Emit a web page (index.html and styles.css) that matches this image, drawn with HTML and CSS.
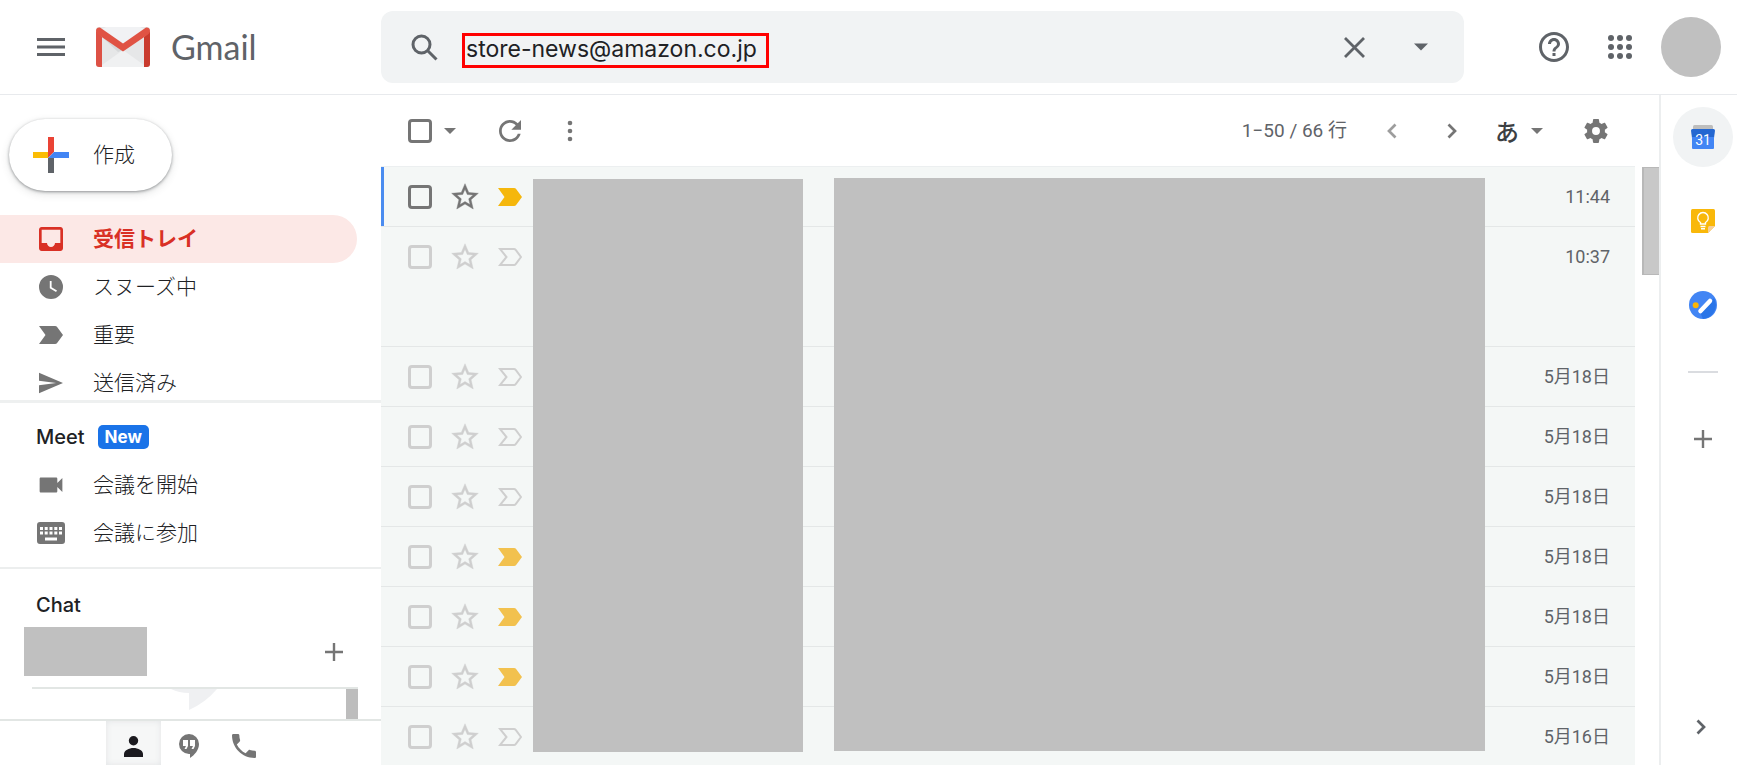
FILE: index.html
```html
<!DOCTYPE html>
<html lang="ja">
<head>
<meta charset="utf-8">
<title>Gmail</title>
<link rel="stylesheet" href="styles.css">
</head>
<body>
<svg class="defs" aria-hidden="true">
  <symbol id="star" viewBox="0 0 24 24"><path d="M22 9.24l-7.19-.62L12 2 9.19 8.63 2 9.24l5.46 4.73L5.82 21 12 17.27 18.18 21l-1.63-7.03L22 9.24zM12 15.4l-3.76 2.27 1-4.28-3.32-2.88 4.38-.38L12 6.1l1.71 4.04 4.38.38-3.32 2.88 1 4.28L12 15.4z" stroke="currentColor" stroke-width=".3"/></symbol>
  <symbol id="mark" viewBox="0 0 24 18"><path d="M0 0h16q1.500 0 2.300 1.200L24 9l-5.700 7.800Q17.500 18 16 18H0l6.500-9z"/></symbol>
  <symbol id="mark-o" viewBox="0 0 24 18"><path d="M2 1h14q1 0 1.700.9L23 9l-5.300 7.100Q17 17 16 17H2l6.500-8z" fill="none" stroke="currentColor" stroke-width="2"/></symbol>
  <symbol id="down" viewBox="0 0 12 6"><path d="M0 0h12L6 6z"/></symbol>
  <symbol id="right" viewBox="0 0 10 16"><path d="M1.500 1.500L8 8l-6.500 6.500" fill="none" stroke="currentColor" stroke-width="2.700"/></symbol>
  <symbol id="plus" viewBox="0 0 18 18"><path d="M9 0v18M0 9h18" fill="none" stroke="currentColor" stroke-width="2.400"/></symbol>
</svg>

<header class="top">
  <div class="brand">
    <button class="icon" aria-label="メインメニュー"><svg width="28" height="18" viewBox="0 0 28 18"><path d="M0 0h28v3H0zM0 7.500h28v3H0zM0 15h28v3H0z"/></svg></button>
    <a class="logo" href="#">
      <svg width="54" height="40" viewBox="0 0 54 40" aria-hidden="true">
        <rect width="54" height="40" rx="3" fill="#e6e7e8"/>
        <path d="M6 10l21 14L48 10V2L44 0H10L6 2z" fill="#f1f2f4"/>
        <path d="M6 38l21-15 21 15v2H6z" fill="#f0f1f2"/>
        <path d="M6 10l16 15 5-2z" fill="#d6d8d9"/>
        <path d="M0 4v33q0 3 3 3h3V10z" fill="#dd5145"/>
        <path d="M54 4v33q0 3-3 3h-3V10z" fill="#c93b2e"/>
        <path d="M0 4Q0 0 4 .5L27 16.500 50 .5Q54 0 54 4q0 2-2 3.500L27 24.500 2 7.500Q0 6 0 4z" fill="#e05344"/>
      </svg>
      <span>Gmail</span>
    </a>
  </div>
  <form class="search" role="search">
    <button class="icon" type="button" aria-label="検索"><svg class="line" width="27" height="27" viewBox="0 0 27 27"><circle cx="10.500" cy="10.500" r="8.500"/><path d="M16.500 16.500l9 9"/></svg></button>
    <input class="query" type="text" aria-label="メールを検索" value="store-news@amazon.co.jp">
    <button class="icon clear" type="button" aria-label="クリア"><svg width="21" height="21" viewBox="0 0 21 21"><path d="M1 1l19 19M20 1L1 20" stroke="currentColor" stroke-width="2.800"/></svg></button>
    <button class="icon" type="button" aria-label="検索オプション"><svg width="14" height="8"><use href="#down"/></svg></button>
  </form>
  <div class="account">
    <button class="icon" aria-label="サポート"><svg width="36" height="36" viewBox="0 0 24 24"><path d="M11 18h2v-2h-2v2zm1-16C6.480 2 2 6.480 2 12s4.480 10 10 10 10-4.480 10-10S17.520 2 12 2zm0 18c-4.410 0-8-3.590-8-8s3.590-8 8-8 8 3.590 8 8-3.590 8-8 8zm0-14c-2.210 0-4 1.790-4 4h2c0-1.100.9-2 2-2s2 .9 2 2c0 2-3 1.750-3 5h2c0-2.250 3-2.500 3-5 0-2.210-1.790-4-4-4z"/></svg></button>
    <button class="icon" aria-label="Google アプリ"><svg width="24" height="24" viewBox="0 0 24 24"><g><circle cx="3" cy="3" r="3"/><circle cx="12" cy="3" r="3"/><circle cx="21" cy="3" r="3"/><circle cx="3" cy="12" r="3"/><circle cx="12" cy="12" r="3"/><circle cx="21" cy="12" r="3"/><circle cx="3" cy="21" r="3"/><circle cx="12" cy="21" r="3"/><circle cx="21" cy="21" r="3"/></g></svg></button>
    <button class="avatar" aria-label="アカウント"></button>
  </div>
</header>

<div class="body">
  <aside class="side">
    <button class="compose">
      <svg width="36" height="36" viewBox="0 0 36 36" aria-hidden="true"><path d="M15 0h6v15l-6 6z" fill="#ea4335"/><path d="M0 15h15v6H0z" fill="#fbbc04"/><path d="M15 21h6v15h-6z" fill="#5f6368"/><path d="M21 15h15v6H15z" fill="#4285f4"/></svg>
      作成
    </button>
    <nav class="folders">
      <a class="item current" href="#"><svg width="24" height="24" viewBox="3 3 18 18"><path d="M19 3H5c-1.100 0-2 .9-2 2v14c0 1.100.9 2 2 2h14c1.100 0 2-.9 2-2V5c0-1.100-.9-2-2-2zm0 12h-4c0 1.660-1.350 3-3 3s-3-1.340-3-3H5V5h14v10z"/></svg>受信トレイ</a>
      <a class="item" href="#"><svg width="24" height="24" viewBox="2 2 20 20"><path d="M12 2a10 10 0 1 0 0 20 10 10 0 0 0 0-20zm4.200 14.200L11 13V7h1.500v5.200l4.500 2.700-.8 1.300z"/></svg>スヌーズ中</a>
      <a class="item" href="#"><svg width="24" height="18"><use href="#mark"/></svg>重要</a>
      <a class="item" href="#"><svg width="24" height="24" viewBox="2 1.500 21 21"><path d="M2 21l21-9L2 3v7l15 2-15 2z"/></svg>送信済み</a>
    </nav>
    <section class="meet">
      <h2>Meet <span class="badge">New</span></h2>
      <a class="item" href="#"><svg width="24" height="24" viewBox="2.500 2.500 19 19"><path d="M17 10.500V7c0-.55-.45-1-1-1H4c-.55 0-1 .45-1 1v10c0 .55.450 1 1 1h12c.55 0 1-.45 1-1v-3.500l4 4v-11l-4 4z"/></svg>会議を開始</a>
      <a class="item wide" href="#"><svg width="28" height="22" viewBox="0 0 28 22"><path fill-rule="evenodd" d="M3 0h22q3 0 3 3v16q0 3-3 3H3q-3 0-3-3V3q0-3 3-3zM3 5v3h3V5zM7.700 5v3h3V5zM12.500 5v3h3V5zM17.300 5v3h3V5zM22 5v3h3V5zM3 9.500v3h3v-3zM7.700 9.500v3h3v-3zM12.500 9.500v3h3v-3zM17.300 9.500v3h3v-3zM22 9.500v3h3v-3zM8 15.500v3h12v-3z"/></svg>会議に参加</a>
    </section>
    <section class="chat">
      <h2>Chat</h2>
      <div class="me"><span class="name"></span><button class="icon" aria-label="新しいチャット"><svg width="18" height="18"><use href="#plus"/></svg></button></div>
      <div class="convos">
        <svg width="46" height="21" viewBox="0 0 46 21" aria-hidden="true"><path d="M0 0h46Q34 14 18 21V4Q8 4 0 0z"/></svg>
        <span class="thumb"></span>
      </div>
    </section>
    <div class="tabs">
      <button class="tab on" aria-label="連絡先"><svg width="19" height="21" viewBox="0 0 19 21"><circle cx="9.500" cy="4.700" r="4.700"/><path d="M0 21v-3c0-3.500 5-6 9.500-6s9.500 2.500 9.500 6v3z"/></svg></button>
      <button class="tab" aria-label="ハングアウト"><svg width="20" height="24" viewBox="0 0 20 24"><path fill-rule="evenodd" d="M10 0a10 10 0 0 1 10 10c0 6-4.500 11-9 14v-4h-1A10 10 0 0 1 10 0zM4 6v6h3l-1.500 3h2L9 12V6zM11 6v6h3l-1.500 3h2L16 12V6z"/></svg></button>
      <button class="tab" aria-label="電話"><svg width="24" height="24" viewBox="3 3 18 18"><path d="M6.620 10.790c1.440 2.830 3.760 5.140 6.590 6.590l2.200-2.200c.27-.27.670-.36 1.020-.24 1.120.370 2.330.570 3.570.570.550 0 1 .45 1 1V20c0 .55-.45 1-1 1C10.610 21 3 13.390 3 4c0-.55.450-1 1-1h3.500c.55 0 1 .45 1 1 0 1.250.2 2.450.570 3.570.110.350.030.740-.25 1.020l-2.200 2.200z"/></svg></button>
    </div>
  </aside>

  <main class="mail">
    <div class="toolbar">
      <input type="checkbox" class="check" aria-label="すべて選択">
      <button class="icon pick" aria-label="選択"><svg width="12" height="6"><use href="#down"/></svg></button>
      <button class="icon reload" aria-label="更新"><svg width="22" height="22" viewBox="4 4 16 16"><path d="M17.650 6.350C16.200 4.900 14.210 4 12 4c-4.420 0-7.990 3.580-7.990 8s3.570 8 7.990 8c3.730 0 6.840-2.550 7.730-6h-2.080c-.82 2.330-3.040 4-5.650 4-3.310 0-6-2.690-6-6s2.690-6 6-6c1.660 0 3.140.690 4.220 1.780L13 11h7V4l-2.350 2.350z"/></svg></button>
      <button class="icon" aria-label="その他"><svg width="6" height="22" viewBox="0 0 6 22"><circle cx="3" cy="3" r="2.300"/><circle cx="3" cy="11" r="2.300"/><circle cx="3" cy="19" r="2.300"/></svg></button>
      <span class="count">1−50 / 66 行</span>
      <button class="icon prev" aria-label="前"><svg width="10" height="16"><use href="#right"/></svg></button>
      <button class="icon next" aria-label="次"><svg width="10" height="16"><use href="#right"/></svg></button>
      <button class="lang">あ<svg width="12" height="6"><use href="#down"/></svg></button>
      <button class="icon" aria-label="設定"><svg width="24" height="26" viewBox="2.300 2 19.400 20"><path d="M19.140 12.940c.040-.3.060-.61.060-.94 0-.32-.02-.64-.07-.94l2.030-1.580c.18-.14.230-.41.120-.61l-1.920-3.320c-.12-.22-.37-.29-.59-.22l-2.390.960c-.5-.38-1.030-.7-1.620-.94l-.36-2.540c-.04-.24-.24-.41-.48-.41h-3.840c-.24 0-.43.170-.47.410l-.36 2.540c-.59.240-1.130.570-1.620.940l-2.390-.96c-.22-.08-.47 0-.59.220L2.740 8.870c-.12.210-.08.470.120.610l2.030 1.580c-.05.300-.09.630-.09.940s.02.640.070.940l-2.030 1.580c-.18.140-.23.410-.12.610l1.920 3.320c.12.220.370.290.590.220l2.390-.96c.5.380 1.030.7 1.620.940l.36 2.540c.05.240.240.410.480.410h3.840c.24 0 .44-.17.470-.41l.36-2.540c.59-.24 1.130-.56 1.620-.94l2.390.960c.22.080.470 0 .59-.22l1.920-3.320c.12-.22.070-.47-.12-.61l-2.010-1.580zM12 15.200A3.200 3.200 0 1 1 12 8.800a3.200 3.200 0 0 1 0 6.400z"/></svg></button>
    </div>
    <div class="scroller">
      <ul class="rows">
        <li class="row focus"><input type="checkbox" class="check" aria-label="選択"><button class="icon" aria-label="スター"><svg width="32" height="32"><use href="#star"/></svg></button><button class="icon gold" aria-label="重要"><svg width="24" height="18"><use href="#mark"/></svg></button><time>11:44</time></li>
        <li class="row tall"><input type="checkbox" class="check" aria-label="選択"><button class="icon" aria-label="スター"><svg width="32" height="32"><use href="#star"/></svg></button><button class="icon" aria-label="重要"><svg width="24" height="18"><use href="#mark-o"/></svg></button><time>10:37</time></li>
        <li class="row"><input type="checkbox" class="check" aria-label="選択"><button class="icon" aria-label="スター"><svg width="32" height="32"><use href="#star"/></svg></button><button class="icon" aria-label="重要"><svg width="24" height="18"><use href="#mark-o"/></svg></button><time>5月18日</time></li>
        <li class="row"><input type="checkbox" class="check" aria-label="選択"><button class="icon" aria-label="スター"><svg width="32" height="32"><use href="#star"/></svg></button><button class="icon" aria-label="重要"><svg width="24" height="18"><use href="#mark-o"/></svg></button><time>5月18日</time></li>
        <li class="row"><input type="checkbox" class="check" aria-label="選択"><button class="icon" aria-label="スター"><svg width="32" height="32"><use href="#star"/></svg></button><button class="icon" aria-label="重要"><svg width="24" height="18"><use href="#mark-o"/></svg></button><time>5月18日</time></li>
        <li class="row"><input type="checkbox" class="check" aria-label="選択"><button class="icon" aria-label="スター"><svg width="32" height="32"><use href="#star"/></svg></button><button class="icon gold" aria-label="重要"><svg width="24" height="18"><use href="#mark"/></svg></button><time>5月18日</time></li>
        <li class="row"><input type="checkbox" class="check" aria-label="選択"><button class="icon" aria-label="スター"><svg width="32" height="32"><use href="#star"/></svg></button><button class="icon gold" aria-label="重要"><svg width="24" height="18"><use href="#mark"/></svg></button><time>5月18日</time></li>
        <li class="row"><input type="checkbox" class="check" aria-label="選択"><button class="icon" aria-label="スター"><svg width="32" height="32"><use href="#star"/></svg></button><button class="icon gold" aria-label="重要"><svg width="24" height="18"><use href="#mark"/></svg></button><time>5月18日</time></li>
        <li class="row"><input type="checkbox" class="check" aria-label="選択"><button class="icon" aria-label="スター"><svg width="32" height="32"><use href="#star"/></svg></button><button class="icon" aria-label="重要"><svg width="24" height="18"><use href="#mark-o"/></svg></button><time>5月16日</time></li>
      </ul>
      <div class="mask senders"></div>
      <div class="mask subjects"></div>
      <div class="track"><div class="bar"></div></div>
    </div>
  </main>

  <aside class="apps">
    <button class="app on" aria-label="カレンダー"><svg width="24" height="24" viewBox="0 0 24 24"><path d="M2 5V1.500Q2 0 3.500 0h17Q22 0 22 1.500V5z" fill="#bdbdbd"/><path d="M0 5.500Q0 4 1.500 4h21Q24 4 24 5.500L23 13H1z" fill="#2467d1"/><path d="M1 12h22v11q0 1-1 1H2q-1 0-1-1z" fill="#4285f4"/><text x="12" y="19.500" class="day">31</text></svg></button>
    <button class="app" aria-label="Keep"><svg width="24" height="24" viewBox="0 0 24 24"><path d="M1.500 0h21Q24 0 24 1.500V17l-7 7H1.500Q0 24 0 22.500v-21Q0 0 1.500 0z" fill="#f9b80a"/><path d="M24 17l-7 7v-5.500q0-1.500 1.500-1.500z" fill="#f6cf9a"/><path d="M9.500 15v-1.500a5.300 5.300 0 1 1 5 0V15zM9.500 17.500h5M10 19.800h4" fill="none" stroke="#fff" stroke-width="1.400"/></svg></button>
    <button class="app" aria-label="ToDo リスト"><svg width="28" height="28" viewBox="0 0 28 28"><circle cx="14" cy="14" r="14" fill="#4285f4"/><path d="M11 21L25 7a14 14 0 0 1-11 21z" fill="#2a75e8"/><circle cx="6.700" cy="14.300" r="3" fill="#fbb404"/><path d="M11.500 20L21 10" stroke="#fff" stroke-width="4.500" stroke-linecap="round"/></svg></button>
    <hr>
    <button class="app" aria-label="アドオンを取得"><svg width="18" height="18"><use href="#plus"/></svg></button>
    <button class="app hide" aria-label="サイドパネルを非表示"><svg width="10" height="16"><use href="#right"/></svg></button>
  </aside>
</div>
</body>
</html>
```
FILE: styles.css
```css
* { box-sizing: border-box; }
body {
  margin: 0;
  height: 100vh;
  display: flex;
  flex-direction: column;
  overflow: hidden;
  background: #fff;
  color: #202124;
  font-family: Roboto, "Noto Sans CJK JP", sans-serif;
  font-size: 18px;
  line-height: 24px;
}
.defs { position: absolute; width: 0; height: 0; }
svg { display: block; fill: currentColor; flex: none; }
.line { fill: none; stroke: currentColor; stroke-width: 3px; }
button {
  border: 0;
  padding: 0;
  background: none;
  color: inherit;
  font: inherit;
  display: flex;
  align-items: center;
  justify-content: center;
  flex: none;
}
a { color: inherit; text-decoration: none; }
h2 { margin: 0; font: 500 20px/24px Inter, sans-serif; }

.top {
  display: flex;
  align-items: center;
  height: 95px;
  flex: none;
  border-bottom: 1px solid #e8eaed;
  color: #5f6368;
}
.brand { width: 381px; flex: none; display: flex; padding-left: 37px; gap: 31px; }
.logo { display: flex; align-items: center; gap: 21px; font: 34px/44px Lato, sans-serif; }
.search {
  flex: 1;
  height: 72px;
  display: flex;
  align-items: center;
  padding: 0 36px 0 30px;
  background: #f1f3f4;
  border-radius: 12px;
}
.query {
  width: 307px;
  height: 35px;
  margin: 6px 0 0 24px;
  padding: 0 1px 3px;
  border: 3px solid #f00;
  background: none;
  color: #202124;
  font: 23px Inter, sans-serif;
}
.clear { margin: 0 49px 0 auto; }
.account { width: 273px; flex: none; display: flex; align-items: center; padding-left: 72px; }
.account .icon { margin-right: 36px; }
.account .icon + .icon { margin-right: 29px; }
.avatar { width: 60px; height: 60px; border-radius: 50%; background: #c0c0c0; }

.body { flex: 1; min-height: 0; display: flex; }
.side { width: 381px; flex: none; display: flex; flex-direction: column; }
.compose {
  align-self: flex-start;
  margin: 24px 0 24px 9px;
  height: 72px;
  padding: 0 37px 0 24px;
  gap: 24px;
  border-radius: 36px;
  box-shadow: 0 1px 3px rgba(60, 64, 67, .5), 0 3px 8px rgba(60, 64, 67, .15);
  font-size: 21px;
  font-weight: 300;
}
.folders { flex: 1; min-height: 0; overflow: hidden; }
.item {
  display: flex;
  align-items: center;
  gap: 30px;
  height: 48px;
  padding-left: 39px;
  font-size: 21px;
  font-weight: 300;
}
.item svg { color: #757575; }
.item.wide { padding-left: 37px; gap: 28px; }
.item.current {
  margin-right: 24px;
  border-radius: 0 24px 24px 0;
  background: #fce8e6;
  color: #d93025;
  font-weight: 700;
}
.current svg { color: inherit; }
.meet { border-top: 3px solid #eef0f0; border-bottom: 2px solid #eceeee; padding: 22px 0 10px; }
.meet h2, .chat h2 { padding-left: 36px; }
.meet h2 { display: flex; align-items: center; gap: 13px; height: 24px; margin-bottom: 12px; }
.badge {
  padding: 0 7px;
  border-radius: 5px;
  background: #1a73e8;
  color: #fff;
  font: 700 17px/24px Inter, sans-serif;
}
.chat { height: 150px; padding-top: 22px; }
.chat h2 { line-height: 28px; }
.me { display: flex; justify-content: space-between; align-items: center; padding: 8px 38px 11px 24px; color: #757575; }
.name { width: 123px; height: 49px; background: #c0c0c0; }
.convos {
  display: flex;
  justify-content: space-between;
  height: 32px;
  margin: 0 23px 0 32px;
  padding-left: 139px;
  border-top: 2px solid #e2e6e4;
  color: #eff0f2;
}
.thumb { width: 12px; background: #bdbdbd; }
.tabs { display: flex; height: 46px; padding-left: 106px; border-top: 2px solid #e2e6e4; color: #757575; }
.tab { width: 55px; padding-top: 6px; }
.tab.on { color: #1b1a1f; background: #f6f7f7; box-shadow: inset 0 0 6px #e2e4e6; }

.mail { flex: 1; min-width: 0; display: flex; flex-direction: column; }
.toolbar {
  display: flex;
  align-items: center;
  height: 72px;
  flex: none;
  margin-right: 24px;
  padding: 0 27px;
  border-bottom: 1px solid #eceff0;
  color: #757575;
}
.check {
  appearance: none;
  width: 24px;
  height: 24px;
  margin: 0;
  border: 3px solid #757575;
  border-radius: 4px;
  flex: none;
}
.pick { margin-left: 12px; }
.reload { margin: 0 46px 0 43px; }
.count { margin-left: auto; color: #5f6368; font-size: 19px; }
.prev { margin-left: 40px; transform: scaleX(-1); opacity: .7; }
.next { margin: 0 38px 0 50px; }
.lang { gap: 12px; margin-right: 41px; font: 500 24px/24px "Noto Sans CJK JP", sans-serif; color: #3c4043; }
.lang svg { color: #757575; }

.scroller { flex: 1; min-height: 0; position: relative; display: flex; overflow: hidden; }
.rows { flex: 1; margin: 0; padding: 0; list-style: none; }
.row {
  display: flex;
  align-items: center;
  height: 60px;
  padding: 0 25px 0 27px;
  background: #f4f7f6;
  border-bottom: 1px solid #e4e7e7;
  color: #cfcfcf;
}
.row.tall { height: 120px; padding-bottom: 60px; }
.row .check { border-color: #cfcfcf; margin-right: 17px; }
.row .icon + .icon { margin-left: 17px; }
.row .gold { color: #f2c14e; }
.row.focus { box-shadow: inset 3px 0 #4a8cf0; color: #757575; }
.focus .check { border-color: #757575; }
.row.focus .gold { color: #f5b70c; }
time { margin-left: auto; color: #5f6368; }
.mask { position: absolute; background: #c0c0c0; }
.senders { top: 12px; bottom: 13px; left: 152px; width: 270px; }
.subjects { top: 11px; bottom: 14px; left: 453px; right: 174px; }
.track { width: 24px; flex: none; padding-left: 7px; }
.bar { height: 108px; background: #c8c8c8; border: solid #b8b8b8; border-width: 1px 0 1px 2px; }

.apps {
  width: 78px;
  flex: none;
  display: flex;
  flex-direction: column;
  align-items: center;
  gap: 24px;
  padding: 12px 0 8px 8px;
  border-left: 2px solid #eceeef;
}
.app { width: 60px; height: 60px; border-radius: 50%; color: #757575; }
.app.on { background: #f1f3f4; }
.day { font: 14px Roboto, sans-serif; fill: #fff; text-anchor: middle; }
.apps hr { width: 30px; margin: 12px 0; border: 0; border-top: 2px solid #dadce0; }
.hide { margin-top: auto; padding-right: 4px; color: #5f6368; }
```
